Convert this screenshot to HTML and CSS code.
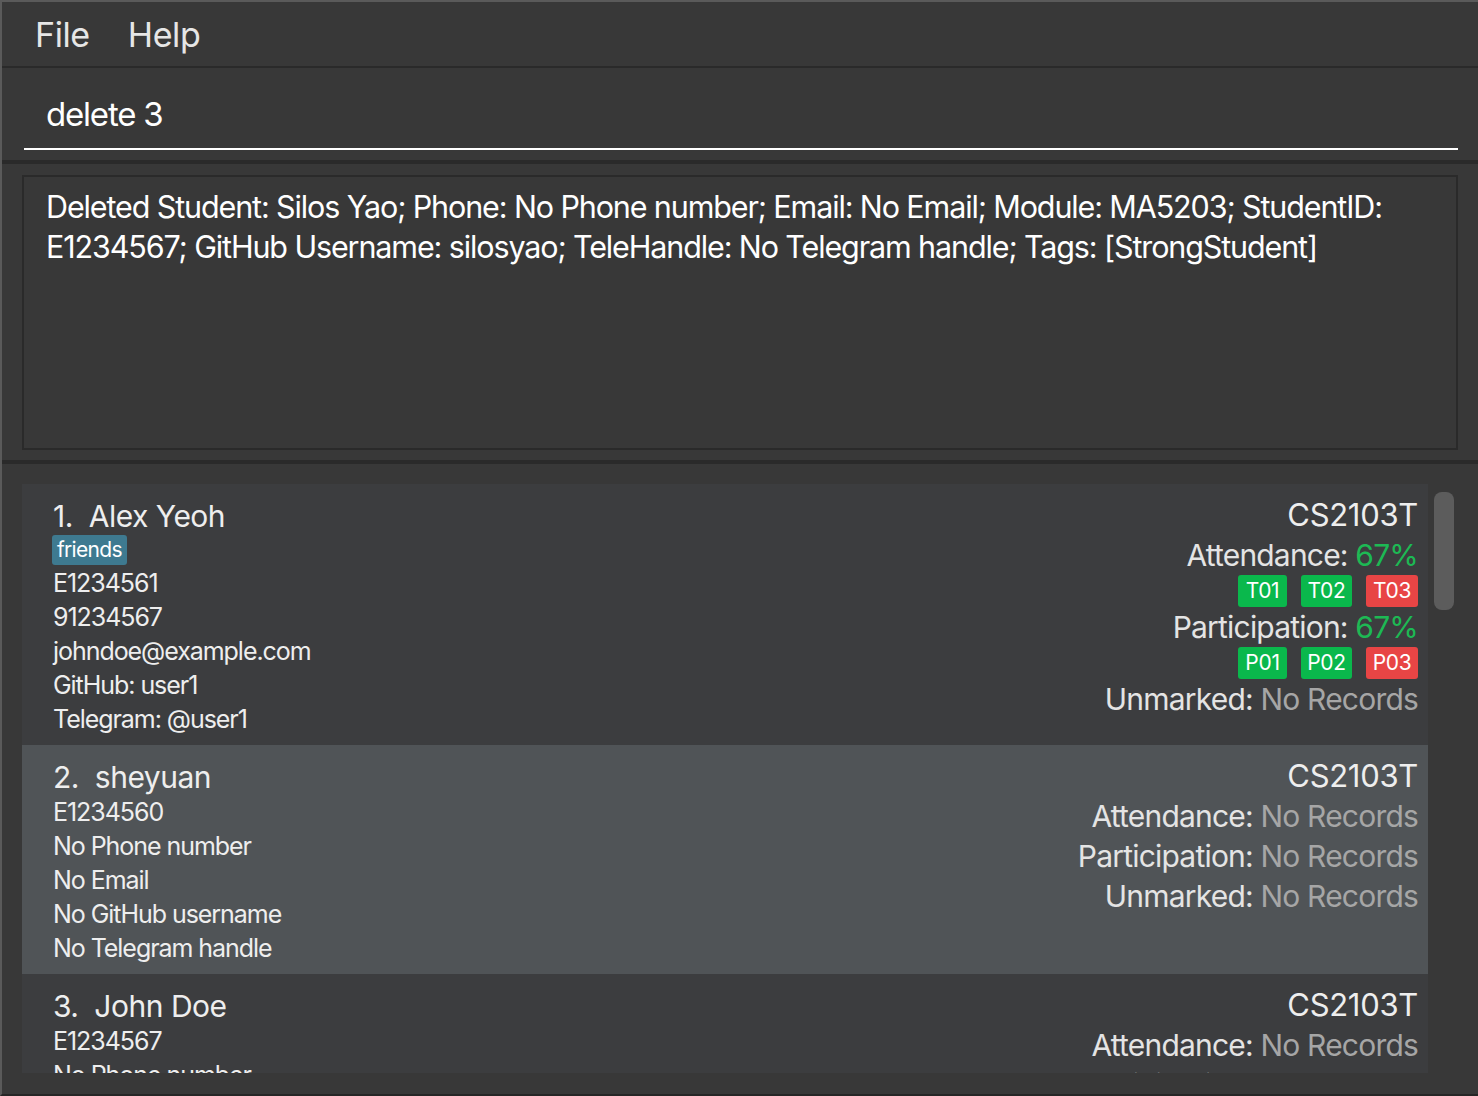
FILE: index.html
```html
<!DOCTYPE html>
<html>
<head>
<meta charset="utf-8">
<link rel="stylesheet" href="styles.css">
</head>
<body>
<div class="app">
  <div class="menubar">
    <span class="menu-item">File</span>
    <span class="menu-item">Help</span>
  </div>
  <div class="cmd">
    <div class="cmd-input">delete 3</div>
  </div>
  <div class="result">
    <div class="result-box">Deleted Student: Silos Yao; Phone: No Phone number; Email: No Email; Module: MA5203; StudentID: E1234567; GitHub Username: silosyao; TeleHandle: No Telegram handle; Tags: [StrongStudent]</div>
  </div>
  <div class="list">
    <div class="viewport">
      <div class="cards">
        <div class="card">
          <div class="left">
            <div class="name">1.&nbsp; Alex Yeoh</div>
            <div class="tags"><span class="tag">friends</span></div>
            <div class="field">E1234561</div>
            <div class="field">91234567</div>
            <div class="field">johndoe@example.com</div>
            <div class="field">GitHub: user1</div>
            <div class="field">Telegram: @user1</div>
          </div>
          <div class="right">
            <div class="module">CS2103T</div>
            <div class="stat">Attendance: <span class="good">67%</span></div>
            <div class="badges"><span class="badge ok">T01</span><span class="badge ok">T02</span><span class="badge bad">T03</span></div>
            <div class="stat">Participation: <span class="good">67%</span></div>
            <div class="badges"><span class="badge ok">P01</span><span class="badge ok">P02</span><span class="badge bad">P03</span></div>
            <div class="stat">Unmarked: <span class="none">No Records</span></div>
          </div>
        </div>
        <div class="card alt">
          <div class="left">
            <div class="name">2.&nbsp; sheyuan</div>
            <div class="field">E1234560</div>
            <div class="field">No Phone number</div>
            <div class="field">No Email</div>
            <div class="field">No GitHub username</div>
            <div class="field">No Telegram handle</div>
          </div>
          <div class="right">
            <div class="module">CS2103T</div>
            <div class="stat">Attendance: <span class="none">No Records</span></div>
            <div class="stat">Participation: <span class="none">No Records</span></div>
            <div class="stat">Unmarked: <span class="none">No Records</span></div>
          </div>
        </div>
        <div class="card">
          <div class="left">
            <div class="name">3.&nbsp; John Doe</div>
            <div class="field">E1234567</div>
            <div class="field">No Phone number</div>
            <div class="field">No Email</div>
            <div class="field">No GitHub username</div>
            <div class="field">No Telegram handle</div>
          </div>
          <div class="right">
            <div class="module">CS2103T</div>
            <div class="stat">Attendance: <span class="none">No Records</span></div>
            <div class="stat">Participation: <span class="none">No Records</span></div>
            <div class="stat">Unmarked: <span class="none">No Records</span></div>
          </div>
        </div>
      </div>
      <div class="scrollbar"><div class="thumb"></div></div>
    </div>
  </div>
</div>
</body>
</html>
```
FILE: styles.css
```css
* { box-sizing: border-box; }
html, body { margin: 0; padding: 0; }
body {
  background: #383838;
  font-family: Inter, "Open Sans", sans-serif;
  color: #eeeeee;
}
.app {
  width: 1478px;
  height: 1096px;
  display: flex;
  flex-direction: column;
  background: #383838;
  border-top: 2px solid #5a5a5a;
  border-left: 2px solid #5a5a5a;
  border-bottom: 2px solid #262626;
  overflow: hidden;
}
.menubar {
  height: 66px;
  flex: none;
  display: flex;
  align-items: center;
  gap: 38px;
  padding: 0 0 0 33px;
  border-bottom: 2px solid #2a2a2a;
}
.menu-item {
  font-size: 34px;
  color: #e6e6e6;
  letter-spacing: -0.4px;
}
.cmd {
  height: 96px;
  flex: none;
  padding: 12px 20px 0 22px;
  border-bottom: 4px solid #2a2a2a;
}
.cmd-input {
  height: 70px;
  padding: 14px 0 0 22px;
  font-size: 33px;
  color: #ffffff;
  letter-spacing: -1.2px;
  border-bottom: 2px solid #ffffff;
}
.result {
  height: 300px;
  flex: none;
  padding: 11px 20px 0 20px;
  border-bottom: 4px solid #2a2a2a;
}
.result-box {
  height: 275px;
  border: 2px solid #2a2a2a;
  padding: 10px 20px 0 22px;
  font-size: 30.5px;
  line-height: 40px;
  color: #ffffff;
  letter-spacing: -1.12px;
}
.list {
  flex: 1;
  padding: 20px 0 21px 20px;
}
.viewport {
  height: 589px;
  display: flex;
  gap: 6px;
}
.cards {
  width: 1406px;
  flex: none;
  overflow: hidden;
}
.card {
  display: flex;
  justify-content: space-between;
  background: #3c3d3f;
  padding: 14px 10px 9px 31px;
}
.card.alt { background: #505457; }
.left { display: flex; flex-direction: column; }
.name {
  font-size: 30px;
  line-height: 36px;
  letter-spacing: -0.5px;
}
.tags { height: 32px; display: flex; align-items: center; }
.tag {
  background: #3e7a90;
  color: #ffffff;
  font-size: 21px;
  line-height: 30px;
  padding: 0 5px;
  border-radius: 3px;
  margin-left: -1px;
  letter-spacing: -0.7px;
}
.field {
  font-size: 25px;
  line-height: 34px;
  letter-spacing: -1.05px;
}
.right {
  display: flex;
  flex-direction: column;
  align-items: flex-end;
  margin-top: -1px;
}
.module {
  font-size: 31px;
  line-height: 36px;
  letter-spacing: -0.3px;
  margin-bottom: 2px;
}
.stat {
  font-size: 30px;
  line-height: 40px;
  letter-spacing: -0.8px;
  color: #e4e4e4;
}
.good { color: #1db954; }
.none { color: #a6a6a6; }
.badges {
  display: flex;
  gap: 14px;
  height: 32px;
}
.badge {
  height: 32px;
  width: 49px;
  font-size: 21px;
  line-height: 32px;
  text-align: center;
  color: #ffffff;
  border-radius: 3px;
  letter-spacing: -0.3px;
}
.badge.ok + .badge.ok { width: 51px; }
.badge.ok { background: #0ab84c; }
.badge.bad { background: #e84545; width: 52px; }
.scrollbar {
  width: 20px;
  flex: none;
  padding-top: 8px;
}
.thumb {
  width: 20px;
  height: 118px;
  background: #5c5c5c;
  border-radius: 8px;
}
```
